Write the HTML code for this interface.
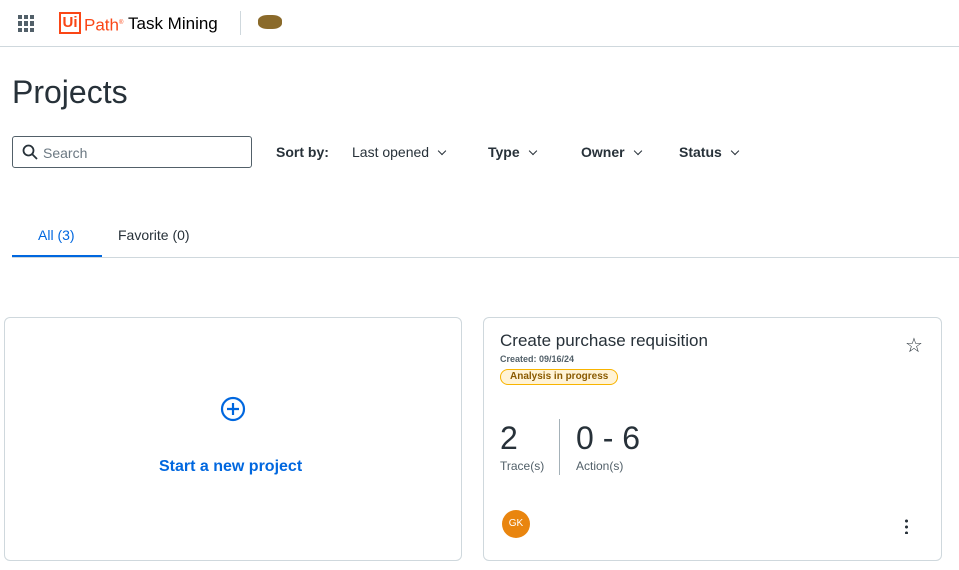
<!DOCTYPE html>
<html><head><style>
*{margin:0;padding:0;box-sizing:border-box}
body{width:959px;height:570px;overflow:hidden;background:#fff;font-family:"Liberation Sans",sans-serif;color:#273139;position:relative}
.a{position:absolute}
.hdr{left:0;top:0;width:959px;height:47px;border-bottom:1px solid #cfd8dd}
.card{border:1px solid #cfd8dd;border-radius:6px;background:#fff}
.sel{font-size:14px;color:#273139}
.sel:after{content:"";display:inline-block;width:5px;height:5px;border-right:1.5px solid #273139;border-bottom:1.5px solid #273139;transform:rotate(45deg);margin-left:10px;position:relative;top:-3px}
</style></head><body>
<div class="a hdr"></div>
<div class="a" style="left:18px;top:15px;width:17px;height:17px;display:grid;grid-template-columns:repeat(3,4px);gap:2px">
<i style="background:#526069"></i><i style="background:#526069"></i><i style="background:#526069"></i><i style="background:#526069"></i><i style="background:#526069"></i><i style="background:#526069"></i><i style="background:#526069"></i><i style="background:#526069"></i><i style="background:#526069"></i></div>
<div class="a" style="left:59px;top:12px;width:22px;height:22px;border:2px solid #fa4616;color:#fa4616;font-size:15px;font-weight:bold;text-align:center;line-height:18px">Ui</div>
<div class="a" style="left:84px;top:12px;color:#fa4616;font-size:17px;line-height:22px">Path<sup style="font-size:6px">®</sup></div>
<div class="a" style="left:128px;top:13px;font-size:17px;color:#000;line-height:22px">Task Mining</div>
<div class="a" style="left:240px;top:11px;width:1px;height:24px;background:#cfd8dd"></div>
<div class="a" style="left:258px;top:15px;width:24px;height:14px;background:#8a6a2a;border-radius:40%"></div>
<div class="a" style="left:12px;top:74px;font-size:32px;color:#273139">Projects</div>
<div class="a" style="left:12px;top:136px;width:240px;height:32px;border:1px solid #526069;border-radius:3px"></div>
<svg class="a" style="left:22px;top:144px" width="16" height="16" viewBox="0 0 16 16"><circle cx="6.5" cy="6.5" r="5" fill="none" stroke="#273139" stroke-width="1.8"/><path d="M10 10l5 5" stroke="#273139" stroke-width="1.8"/></svg>
<div class="a" style="left:43px;top:145px;font-size:14px;color:#6b7882">Search</div>
<div class="a" style="left:276px;top:144px;font-size:14px;font-weight:bold">Sort by:</div>
<div class="a sel" style="left:352px;top:144px">Last opened</div>
<div class="a sel" style="left:488px;top:144px;font-weight:bold">Type</div>
<div class="a sel" style="left:581px;top:144px;font-weight:bold">Owner</div>
<div class="a sel" style="left:679px;top:144px;font-weight:bold">Status</div>
<div class="a" style="left:38px;top:227px;font-size:14px;color:#0067df">All (3)</div>
<div class="a" style="left:118px;top:227px;font-size:14px;color:#273139">Favorite (0)</div>
<div class="a" style="left:12px;top:257px;width:947px;height:1px;background:#cfd8dd"></div>
<div class="a" style="left:12px;top:255px;width:90px;height:2px;background:#0067df"></div>
<div class="a card" style="left:4px;top:317px;width:458px;height:244px"></div>
<svg class="a" style="left:220px;top:396px" width="26" height="26" viewBox="0 0 26 26"><circle cx="13" cy="13" r="11" fill="none" stroke="#0067df" stroke-width="2.2"/><path d="M13 7v12M7 13h12" stroke="#0067df" stroke-width="2.2"/></svg>
<div class="a" style="left:159px;top:458px;font-size:16px;color:#0067df;font-weight:bold">Start a new project</div>
<div class="a card" style="left:483px;top:317px;width:459px;height:244px"></div>
<div class="a" style="left:500px;top:331px;font-size:17px;color:#273139">Create purchase requisition</div>
<div class="a" style="left:500px;top:354px;font-size:9px;font-weight:bold;color:#526069">Created: 09/16/24</div>
<div class="a" style="left:500px;top:369px;height:16px;padding:0 9px;border:1px solid #f8b400;background:#fff3d6;border-radius:8px;font-size:10px;line-height:14px;color:#8a5a00;font-weight:bold">Analysis in progress</div>
<div class="a" style="left:905px;top:333px;font-size:20px;color:#273139">☆</div>
<div class="a" style="left:500px;top:420px;font-size:32px;color:#273139">2</div>
<div class="a" style="left:500px;top:459px;font-size:12px;color:#526069">Trace(s)</div>
<div class="a" style="left:559px;top:419px;width:1px;height:56px;background:#a4b1b8"></div>
<div class="a" style="left:576px;top:420px;font-size:32px;color:#273139">0 - 6</div>
<div class="a" style="left:576px;top:459px;font-size:12px;color:#526069">Action(s)</div>
<div class="a" style="left:502px;top:510px;width:28px;height:28px;border-radius:50%;background:#e9850f;color:#fff;font-size:10px;text-align:center;line-height:28px">GK</div>
<div class="a" style="left:905px;top:518px;width:3px;height:16px;background:radial-gradient(circle,#273139 1.4px,transparent 1.6px) 0 0/3px 6px"></div>
</body></html>
